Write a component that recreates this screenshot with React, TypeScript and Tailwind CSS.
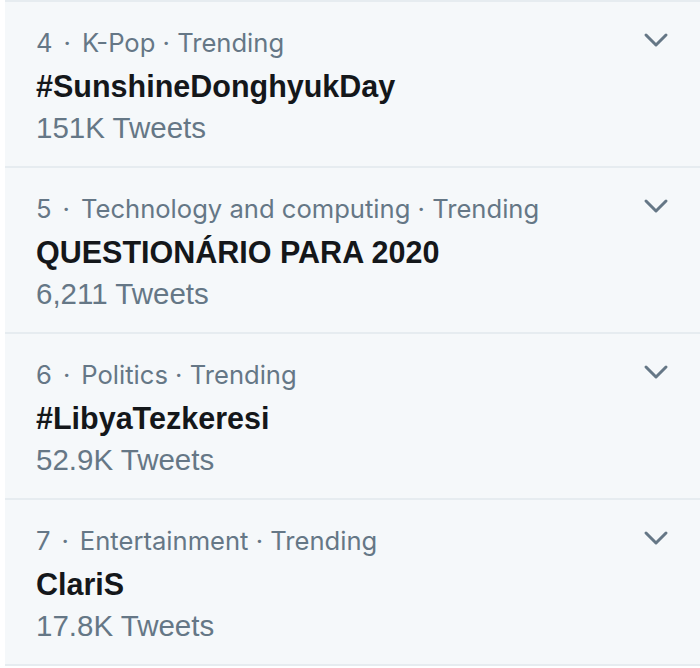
import React from "react";

type Trend = {
  rank: number;
  category: string;
  title: string;
  count: string;
};

const trends: Trend[] = [
  { rank: 4, category: "K-Pop", title: "#SunshineDonghyukDay", count: "151K Tweets" },
  { rank: 5, category: "Technology and computing", title: "QUESTIONÁRIO PARA 2020", count: "6,211 Tweets" },
  { rank: 6, category: "Politics", title: "#LibyaTezkeresi", count: "52.9K Tweets" },
  { rank: 7, category: "Entertainment", title: "ClariS", count: "17.8K Tweets" },
];

function Chevron() {
  return (
    <svg width="26" height="16" viewBox="0 0 26 16" className="block">
      <polyline
        points="3,3 13,13 23,3"
        fill="none"
        stroke="#657786"
        strokeWidth={3}
        strokeLinecap="round"
        strokeLinejoin="round"
      />
    </svg>
  );
}

function TrendRow({ trend }: { trend: Trend }) {
  return (
    <div className="relative border-t-2 border-[#e6ecf0] pl-[31px] pr-[30px] pt-[20px] pb-[18px]">
      <div className="h-[43px] flex items-center text-[25.6px] text-[#657786] font-['Inter',sans-serif] whitespace-pre">
        <span>{trend.rank}</span>
        <span className="mx-[11px]">·</span>
        <span>{trend.category} · Trending</span>
      </div>
      <div className="h-[43px] flex items-center text-[30.5px] font-bold text-[#14171a]">
        {trend.title}
      </div>
      <div className="h-[40px] flex items-center text-[29.5px] text-[#657786]">
        {trend.count}
      </div>
      <div className="absolute right-[31px] top-[30px]">
        <Chevron />
      </div>
    </div>
  );
}

export default function App() {
  return (
    <div
      className="w-[700px] h-[668px] bg-white pl-[5px] overflow-hidden"
      style={{ fontFamily: '"Liberation Sans", Arial, sans-serif' }}
    >
      <div className="bg-[#f5f8fa] border-b-2 border-[#e6ecf0]">
        {trends.map((t) => (
          <TrendRow key={t.rank} trend={t} />
        ))}
      </div>
    </div>
  );
}
